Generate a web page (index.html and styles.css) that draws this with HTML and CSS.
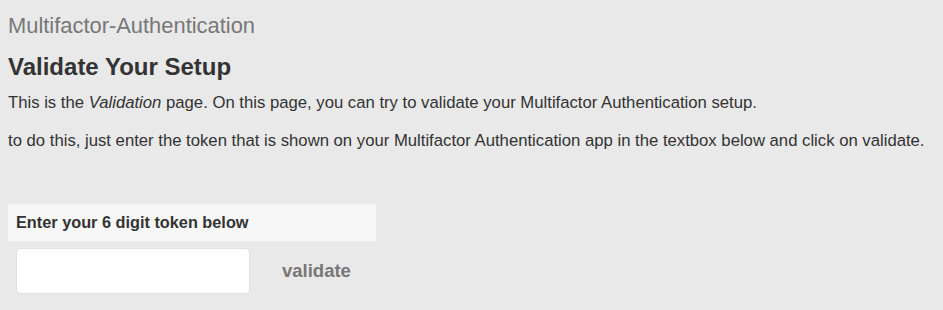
FILE: index.html
```html
<!DOCTYPE html>
<html>
<head>
<meta charset="utf-8">
<link rel="stylesheet" href="styles.css">
</head>
<body>
<div class="page">
  <h1 class="brand">Multifactor-Authentication</h1>
  <h2 class="title">Validate Your Setup</h2>
  <p class="text">This is the <em>Validation</em> page. On this page, you can try to validate your Multifactor Authentication setup.</p>
  <p class="text">to do this, just enter the token that is shown on your Multifactor Authentication app in the textbox below and click on validate.</p>
  <div class="panel">
    <div class="panel-head">Enter your 6 digit token below</div>
    <div class="panel-body">
      <input class="token" type="text">
      <button class="validate" type="button">validate</button>
    </div>
  </div>
</div>
</body>
</html>
```
FILE: styles.css
```css
html, body {
  margin: 0;
  padding: 0;
  background: #e9e9e9;
}
body {
  font-family: "Liberation Sans", Arial, sans-serif;
  color: #333;
}
.page {
  padding: 0 8px;
}
.brand {
  margin: 0;
  padding-top: 14px;
  font-size: 21.9px;
  line-height: 24px;
  font-weight: normal;
  color: #777;
}
.title {
  margin: 15px 0 0;
  font-size: 24px;
  line-height: 28px;
  font-weight: bold;
  color: #333;
}
.text {
  margin: 12px 0 0;
  font-size: 16.7px;
  line-height: 20px;
}
.text + .text {
  margin-top: 18px;
}
.panel {
  margin-top: 53px;
  width: 368px;
}
.panel-head {
  background: #f7f7f7;
  padding: 0 8px;
  height: 37px;
  line-height: 37px;
  font-size: 16.3px;
  font-weight: bold;
}
.panel-body {
  display: flex;
  align-items: center;
  padding: 7px 8px;
}
.token {
  width: 234px;
  height: 46px;
  box-sizing: border-box;
  border: 1px solid #dde0e6;
  border-radius: 4px;
  background: #fff;
  margin: 0;
}
.validate {
  margin-left: 32px;
  background: none;
  border: none;
  padding: 0;
  font-family: "Liberation Sans", Arial, sans-serif;
  font-size: 18.5px;
  font-weight: bold;
  color: #777;
}
```
